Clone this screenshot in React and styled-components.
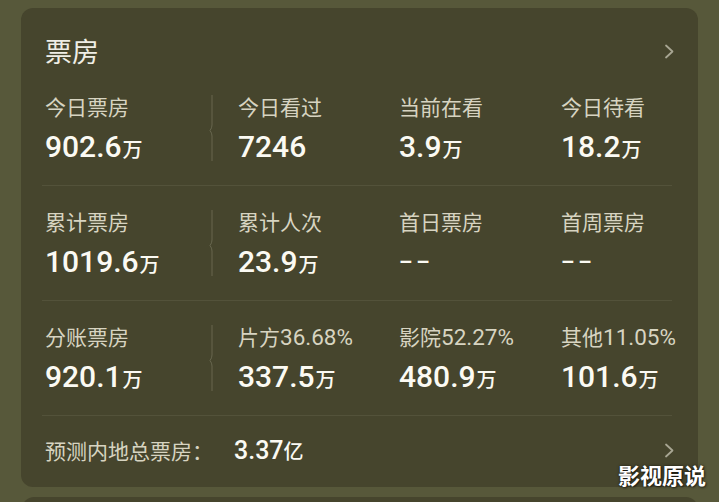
import React from 'react';
import styled, { createGlobalStyle } from 'styled-components';

const GlobalStyle = createGlobalStyle`
	html, body {
		margin: 0;
		padding: 0;
		background: #57583a;
	}
	body {
		width: 719px;
		height: 502px;
		overflow: hidden;
		font-family: 'Roboto', 'Noto Sans CJK SC', sans-serif;
	}
`;

const Page = styled.div`
	position: relative;
	padding: 8px 21px 0;
	height: 502px;
	box-sizing: border-box;
	overflow: hidden;
`;
const Card = styled.div`
	background: #46452d;
	border-radius: 12px;
	padding: 0 26px 0 21px;
`;
const NextCard = styled(Card)`
	margin-top: 10px;
	margin-left: 1px;
	height: 60px;
`;
const Header = styled.div`
	display: flex;
	justify-content: space-between;
	align-items: center;
	height: 63px;
	padding: 28px 0 5px 3px;
	box-sizing: border-box;
	color: #efeee5;
	font-size: 27px;
	line-height: 30px;
	font-family: 'Noto Sans CJK SC', sans-serif;
`;
const Chevron = styled.svg`
	width: 11px;
	height: 15px;
	margin-right: -3px;
	flex-shrink: 0;
`;
const Row = styled.div`
	display: grid;
	grid-template-columns: 193px 161px 162px 1fr;
	height: 115px;
	padding-left: 3px;
	box-sizing: border-box;
	border-bottom: 1px solid #53523a;
`;
const FirstCell = styled.div`
	display: flex;
	justify-content: space-between;
	padding-right: 24px;
`;
const Stat = styled.div`
	display: flex;
	flex-direction: column;
`;
const Label = styled.div`
	margin-top: 23px;
	height: 24px;
	line-height: 24px;
	font-size: 21px;
	color: #d7d4c1;
	white-space: nowrap;
	font-family: 'Noto Sans CJK SC', sans-serif;
`;
const Pct = styled.span`
	font-family: 'Roboto', sans-serif;
	font-size: 22.5px;
`;
const Value = styled.div`
	margin-top: 13px;
	height: 32px;
	line-height: 32px;
	color: #fbfaf3;
	white-space: nowrap;
`;
const Num = styled.span`
	font-family: 'Roboto', sans-serif;
	font-size: 30px;
	font-weight: 500;
`;
const Unit = styled.span`
	font-family: 'Noto Sans CJK SC', sans-serif;
	font-size: 20px;
	font-weight: 500;
	margin-left: 1px;
`;
const Dash = styled.span`
	display: inline-block;
	font-family: 'Roboto', sans-serif;
	font-size: 21px;
	font-weight: 700;
	margin-right: 4px;
	vertical-align: 3px;
`;
const Divider = styled.svg`
	margin-top: 24px;
	width: 6px;
	height: 66px;
	flex-shrink: 0;
`;
const Footer = styled.div`
	display: flex;
	justify-content: space-between;
	align-items: center;
	padding: 22px 0 24px 3px;
	line-height: 24px;
`;
const FooterText = styled.div`
	font-size: 21px;
	color: #d7d4c1;
	font-family: 'Noto Sans CJK SC', sans-serif;
`;
const FooterValue = styled.span`
	margin-left: 21px;
	color: #fbfaf3;
	font-family: 'Roboto', 'Noto Sans CJK SC', sans-serif;
	font-size: 25px;
	font-weight: 500;
`;
const FooterUnit = styled.span`
	font-family: 'Noto Sans CJK SC', sans-serif;
	font-size: 20px;
`;
const Watermark = styled.div`
	position: absolute;
	right: 13px;
	top: 459px;
	color: #ffffff;
	font-family: 'Noto Sans CJK SC', sans-serif;
	font-weight: 700;
	font-size: 22px;
	line-height: 30px;
	text-shadow: 0 0 3px rgba(0, 0, 0, 0.6), 1px 1px 2px rgba(0, 0, 0, 0.5);
`;

const rows = [
	[
		{ label: '今日票房', num: '902.6', unit: '万' },
		{ label: '今日看过', num: '7246' },
		{ label: '当前在看', num: '3.9', unit: '万' },
		{ label: '今日待看', num: '18.2', unit: '万' },
	],
	[
		{ label: '累计票房', num: '1019.6', unit: '万' },
		{ label: '累计人次', num: '23.9', unit: '万' },
		{ label: '首日票房', empty: true },
		{ label: '首周票房', empty: true },
	],
	[
		{ label: '分账票房', num: '920.1', unit: '万' },
		{ label: '片方', pct: '36.68%', num: '337.5', unit: '万' },
		{ label: '影院', pct: '52.27%', num: '480.9', unit: '万' },
		{ label: '其他', pct: '11.05%', num: '101.6', unit: '万' },
	],
];

function ArrowIcon() {
	return (
		<Chevron viewBox='0 0 11 15'>
			<path d='M2 1.5 L8.5 7.5 L2 13.5' fill='none' stroke='#a8a693' strokeWidth='1.8' strokeLinecap='round' strokeLinejoin='round' />
		</Chevron>
	);
}

function StatBlock({ item }) {
	return (
		<Stat>
			<Label>
				{item.label}
				{item.pct ? <Pct>{item.pct}</Pct> : null}
			</Label>
			<Value>
				{item.empty ? (
					<>
						<Dash>–</Dash>
						<Dash>–</Dash>
					</>
				) : (
					<>
						<Num>{item.num}</Num>
						{item.unit ? <Unit>{item.unit}</Unit> : null}
					</>
				)}
			</Value>
		</Stat>
	);
}

export default function App() {
	return (
		<Page>
			<GlobalStyle />
			<Card>
				<Header>
					<span>票房</span>
					<ArrowIcon />
				</Header>
				{rows.map((row, i) => (
					<Row key={i}>
						<FirstCell>
							<StatBlock item={row[0]} />
							<Divider viewBox='0 0 6 66'>
								<path d='M4 0 V30 Q4 33 2 35.5 Q4 38 4 41 V66' fill='none' stroke='#68674f' strokeWidth='1' />
							</Divider>
						</FirstCell>
						{row.slice(1).map(item => (
							<StatBlock key={item.label} item={item} />
						))}
					</Row>
				))}
				<Footer>
					<FooterText>
						预测内地总票房：
						<FooterValue>
							3.37<FooterUnit>亿</FooterUnit>
						</FooterValue>
					</FooterText>
					<ArrowIcon />
				</Footer>
			</Card>
			<NextCard />
			<Watermark>影视原说</Watermark>
		</Page>
	);
}
